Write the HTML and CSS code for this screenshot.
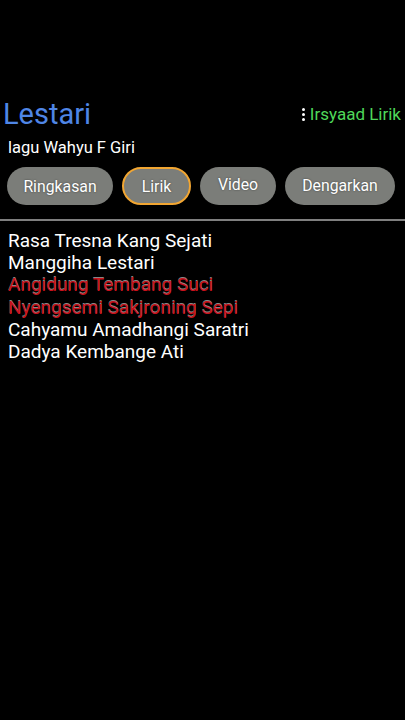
FILE: index.html
```html
<!DOCTYPE html>
<html>
<head>
<meta charset="utf-8">
<link rel="stylesheet" href="styles.css">
</head>
<body>
<div class="page">
  <header class="head">
    <h1 class="title">Lestari</h1>
    <div class="brand"><span class="dots"><i></i><i></i><i></i></span>Irsyaad Lirik</div>
  </header>
  <div class="sub">lagu Wahyu F Giri</div>
  <nav class="tabs">
    <span class="tab t1">Ringkasan</span>
    <span class="tab t2 active">Lirik</span>
    <span class="tab t3">Video</span>
    <span class="tab t4">Dengarkan</span>
  </nav>
  <div class="rule"></div>
  <div class="lyrics">
    <div>Rasa Tresna Kang Sejati</div>
    <div>Manggiha Lestari</div>
    <div class="hl">Angidung Tembang Suci</div>
    <div class="hl">Nyengsemi Sakjroning Sepi</div>
    <div>Cahyamu Amadhangi Saratri</div>
    <div>Dadya Kembange Ati</div>
  </div>
</div>
</body>
</html>
```
FILE: styles.css
```css
html, body { margin: 0; padding: 0; background: #000; }
body { font-family: Roboto, "Noto Sans", sans-serif; color: #fff; width: 405px; height: 720px; overflow: hidden; }
.page { padding-top: 94px; }
.head { display: flex; justify-content: space-between; align-items: center; padding: 0 4px 0 3px; height: 40px; }
.title { margin: 0; font-weight: 400; font-size: 29px; color: #4f86e6; line-height: 40px; }
.brand { display: flex; align-items: center; color: #4fd85a; font-size: 17px; }
.dots { display: flex; flex-direction: column; gap: 2px; margin-right: 5px; }
.dots i { display: block; width: 3px; height: 3px; background: #fff; border-radius: 50%; }
.sub { padding-left: 8px; font-size: 16.5px; line-height: 20px; margin-top: 4px; }
.tabs { display: flex; padding: 9px 0 0 7px; }
.tab { display: flex; align-items: center; justify-content: center; height: 38px; box-sizing: border-box; background: #7b7d79; border-radius: 19px; font-size: 15.8px; color: #fff; text-shadow: 0 0 2px rgba(0,0,0,0.5); }
.t1 { width: 106px; }
.t2 { width: 69px; margin-left: 9px; }
.t3 { width: 76px; margin-left: 9px; padding-bottom: 3px; }
.t4 { width: 110px; margin-left: 9px; padding-bottom: 2px; }
.active { border: 2px solid #f2a632; }
.rule { height: 2px; background: #7f7f7f; margin-top: 14px; }
.lyrics { padding: 9px 0 0 8px; font-size: 19px; line-height: 22.2px; }
.hl { color: #c8111b; text-shadow: 0 -1px 0 rgba(255,255,255,0.55); }
```
